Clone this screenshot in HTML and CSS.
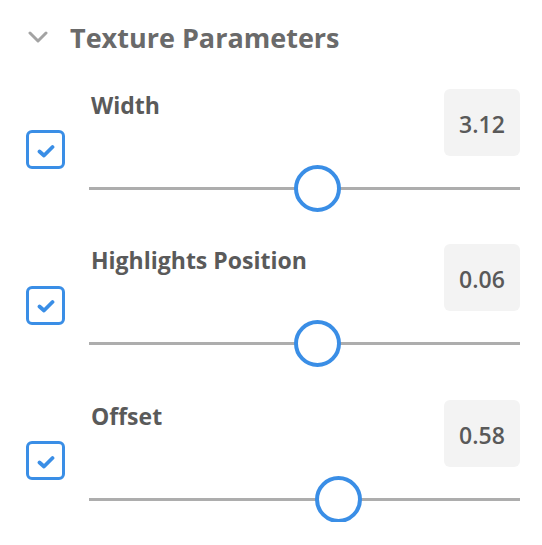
FILE: index.html
```html
<!DOCTYPE html>
<html>
<head>
    <title>Texture Parameters</title>
    <link rel="stylesheet" href="styles.css">
</head>
<body>
    <div class="panel">
        <div class="panel-header">
            <svg class="chevron" width="20" height="12" viewBox="0 0 20 12">
                <path d="M2 2 L10 10 L18 2" fill="none" stroke="#a3a3a3" stroke-width="3" stroke-linecap="round" stroke-linejoin="round"/>
            </svg>
            <span class="panel-title">Texture Parameters</span>
        </div>

        <div class="param-row">
            <div class="check-box">
                <svg width="18" height="14" viewBox="0 0 18 14">
                    <path d="M2.5 7.5 L7 11.5 L15.5 3" fill="none" stroke="#3a8ee6" stroke-width="3.8" stroke-linecap="round" stroke-linejoin="round"/>
                </svg>
            </div>
            <div class="param-body">
                <div class="param-top">
                    <span class="param-label">Width</span>
                    <span class="param-value">3.12</span>
                </div>
                <div class="slider">
                    <div class="slider-track"></div>
                    <div class="slider-thumb" style="left: 52.9%"></div>
                </div>
            </div>
        </div>

        <div class="param-row">
            <div class="check-box">
                <svg width="18" height="14" viewBox="0 0 18 14">
                    <path d="M2.5 7.5 L7 11.5 L15.5 3" fill="none" stroke="#3a8ee6" stroke-width="3.8" stroke-linecap="round" stroke-linejoin="round"/>
                </svg>
            </div>
            <div class="param-body">
                <div class="param-top">
                    <span class="param-label">Highlights Position</span>
                    <span class="param-value">0.06</span>
                </div>
                <div class="slider">
                    <div class="slider-track"></div>
                    <div class="slider-thumb" style="left: 52.9%"></div>
                </div>
            </div>
        </div>

        <div class="param-row">
            <div class="check-box">
                <svg width="18" height="14" viewBox="0 0 18 14">
                    <path d="M2.5 7.5 L7 11.5 L15.5 3" fill="none" stroke="#3a8ee6" stroke-width="3.8" stroke-linecap="round" stroke-linejoin="round"/>
                </svg>
            </div>
            <div class="param-body">
                <div class="param-top">
                    <span class="param-label">Offset</span>
                    <span class="param-value">0.58</span>
                </div>
                <div class="slider">
                    <div class="slider-track"></div>
                    <div class="slider-thumb" style="left: 57.8%"></div>
                </div>
            </div>
        </div>
    </div>
</body>
</html>
```

FILE: styles.css
```css
body {
    margin: 0;
    padding: 0;
    background-color: #fff;
    font-family: "Open Sans", "Noto Sans", sans-serif;
}

.panel {
    padding: 19px 22px 0 26px;
}

.panel-header {
    display: flex;
    align-items: center;
    height: 36px;
    margin-bottom: 3px;
}

.chevron {
    margin-left: 2px;
    margin-right: 22px;
}

.panel-title {
    font-size: 27px;
    font-weight: 700;
    color: #6a6a6a;
}

.param-row {
    display: flex;
    align-items: center;
    margin-top: 33.5px;
}

.check-box {
    box-sizing: border-box;
    width: 39px;
    height: 39px;
    border: 3.5px solid #3a8ee6;
    border-radius: 6px;
    display: flex;
    align-items: center;
    justify-content: center;
    margin-right: 24px;
    flex-shrink: 0;
}

.check-box svg {
    margin-top: 2px;
}

.param-body {
    flex: 1;
}

.param-top {
    display: flex;
    justify-content: space-between;
    align-items: flex-start;
    height: 67px;
}

.param-label {
    font-size: 23px;
    font-weight: 700;
    color: #5a5a5a;
    margin-left: 2px;
}

.param-value {
    box-sizing: border-box;
    width: 76px;
    height: 67px;
    padding-top: 3px;
    background-color: #f3f3f3;
    border-radius: 6px;
    display: flex;
    align-items: center;
    justify-content: center;
    font-size: 23px;
    font-weight: 600;
    color: #595959;
}

.slider {
    position: relative;
    height: 46px;
    margin-top: 9px;
}

.slider-track {
    position: absolute;
    left: 0;
    right: 0;
    top: 22px;
    height: 3px;
    background-color: #adadad;
}

.slider-thumb {
    position: absolute;
    top: 0;
    box-sizing: border-box;
    width: 47px;
    height: 47px;
    margin-left: -23px;
    border: 4px solid #3a8ee6;
    border-radius: 50%;
    background-color: #fff;
}
```
